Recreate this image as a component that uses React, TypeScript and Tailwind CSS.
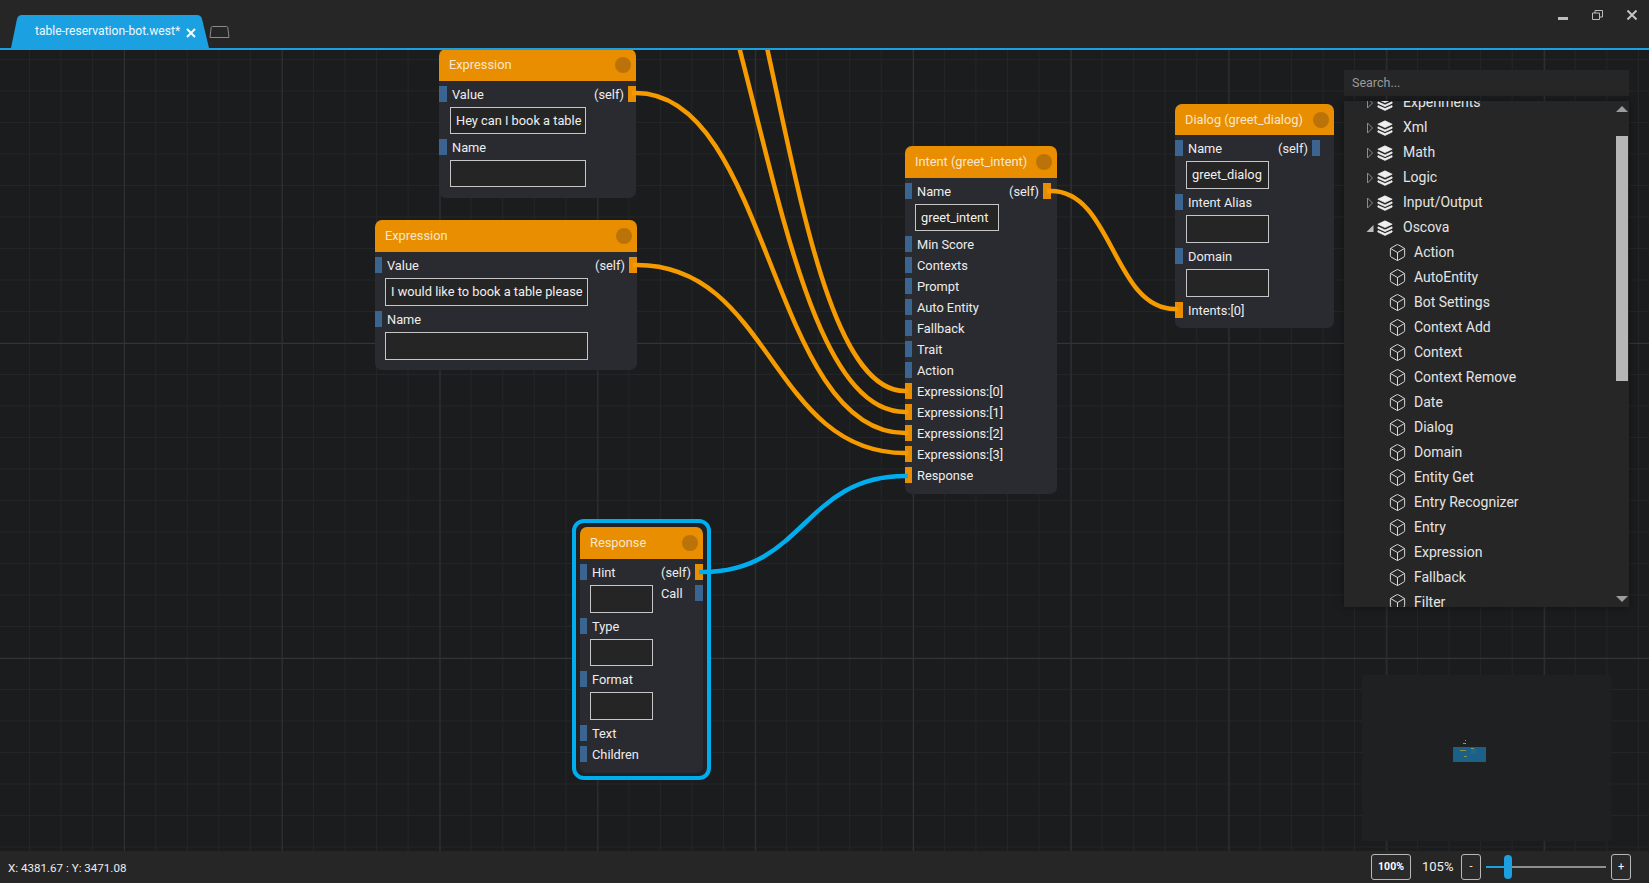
import React from 'react';
import { Box } from 'lucide-react';

const FONT = "font-['Roboto','Noto_Sans',sans-serif]";

type Field = { label: string; orange?: boolean; input?: string; inputW?: string };
type Out = { label: string; orange?: boolean };

interface NodeProps {
  title: string;
  place: string;
  width: string;
  fields: Field[];
  outs: Out[];
  header?: string;
  inputH?: string;
  outInset?: string;
  bottom?: string;
  wide?: boolean;
  selected?: boolean;
}

const Port = ({ orange, wide }: { orange?: boolean; wide?: boolean }) => (
  <span className={`block h-4 shrink-0 ${wide ? 'w-2' : 'w-[7px]'} ${orange ? 'bg-[#e98e00]' : 'bg-[#3b6591]'}`} />
);

const GraphNode: React.FC<NodeProps> = ({
  title,
  place,
  width,
  fields,
  outs,
  header = 'h-8',
  inputH = 'h-7',
  outInset = 'pr-0',
  bottom = 'pb-[11px]',
  wide,
  selected,
}) => (
  <div className={`absolute ${place} ${width}`}>
    {selected && (
      <div className="absolute -top-2 -bottom-[7px] -left-2 -right-2 rounded-[12px] border-4 border-[#00aeef] bg-[#202125]" />
    )}
    <div className={`relative rounded-[7px] bg-[#2a2b30] overflow-hidden ${bottom}`}>
      <div className={`flex items-center justify-between bg-[#e98e00] pl-[10px] pr-[5px] ${header}`}>
        <span className="text-[12.8px] text-[#f8e6cd] whitespace-nowrap">{title}</span>
        <span className="block w-4 h-4 rounded-full bg-[#bb7309]" />
      </div>
      <div className="flex pt-[5px]">
        <div className="flex flex-col gap-[5px]">
          {fields.map((f) => (
            <div key={f.label} className="flex flex-col gap-[5px]">
              <div className="flex items-center h-4 gap-[5px]">
                <Port orange={f.orange} wide={wide} />
                <span className="pt-[2px] text-[12.8px] text-[#ededed] whitespace-nowrap">{f.label}</span>
              </div>
              {f.inputW && (
                <div
                  className={`flex items-center border border-[#c6c6c6] bg-[#252525] pl-[5px] text-[12.8px] text-[#f0f0f0] whitespace-nowrap ${wide ? 'ml-[11px]' : 'ml-[10px]'} ${f.inputW} ${inputH}`}
                >
                  {f.input}
                </div>
              )}
            </div>
          ))}
        </div>
        <div className={`ml-auto flex flex-col gap-[5px] ${outInset}`}>
          {outs.map((o) => (
            <div key={o.label} className="flex items-center h-4 gap-[5px]">
              <span className="pt-[2px] w-[29px] text-[12.8px] text-[#ededed]">{o.label}</span>
              <Port orange={o.orange} wide />
            </div>
          ))}
        </div>
      </div>
    </div>
  </div>
);

const StackIcon = () => (
  <svg width="16" height="16" viewBox="0 0 16 16" className="shrink-0" fill="#f0f0f0" stroke="#f0f0f0" strokeWidth="0.7" strokeLinejoin="round">
    <path d="M8 0.8 L15.2 4.2 L8 7.6 L0.8 4.2 Z" />
    <path d="M1 6.8 L8 10 L15 6.8 L15.2 8.2 L8 11.6 L0.8 8.2 Z" />
    <path d="M1 10.6 L8 13.6 L15 10.6 L15.2 12 L8 15.4 L0.8 12 Z" />
  </svg>
);

const groups = ['Experiments', 'Xml', 'Math', 'Logic', 'Input/Output'];
const items = [
  'Action',
  'AutoEntity',
  'Bot Settings',
  'Context Add',
  'Context',
  'Context Remove',
  'Date',
  'Dialog',
  'Domain',
  'Entity Get',
  'Entry Recognizer',
  'Entry',
  'Expression',
  'Fallback',
  'Filter',
];

const GroupRow = ({ name, open }: { name: string; open?: boolean }) => (
  <div className="flex items-center h-[25px] pl-[22px]">
    <svg width="8" height="12" viewBox="0 0 8 12" className="shrink-0 mr-[3px]">
      {open ? (
        <path d="M7.5 3 V10 H0.5 Z" fill="#bdbdbd" />
      ) : (
        <path d="M1.5 1 L6.5 6 L1.5 11 Z" fill="none" stroke="#8c8c8c" />
      )}
    </svg>
    <StackIcon />
    <span className="ml-[10px] text-[14px] text-[#e4e4e4]">{name}</span>
  </div>
);

const NodePanel = () => (
  <div className="absolute left-[1344px] top-5 w-[285px] flex flex-col gap-[5px]">
    <div className="flex items-center h-[26px] bg-[#262626] pl-2 text-[12.5px] text-[#9a9a9a]">Search...</div>
    <div className="relative h-[506px] bg-[#262626] overflow-hidden shadow-[0_0_8px_rgba(0,0,0,0.35)]">
      <div className="-mt-[11px]">
        {groups.map((g) => (
          <GroupRow key={g} name={g} />
        ))}
        <GroupRow name="Oscova" open />
        {items.map((it) => (
          <div key={it} className="flex items-center h-[25px] pl-[44px]">
            <Box size={19} strokeWidth={1.25} className="text-[#dcdcdc] shrink-0" />
            <span className="ml-[7px] text-[14px] text-[#e4e4e4]">{it}</span>
          </div>
        ))}
      </div>
      {/* scrollbar */}
      <div className="absolute right-px top-0 bottom-0 w-3 flex flex-col items-center">
        <svg width="12" height="6" viewBox="0 0 12 6" className="mt-[5px]">
          <path d="M6 0 L12 6 H0 Z" fill="#9c9c9c" />
        </svg>
        <div className="mt-6 w-3 h-[245px] bg-[#b6b6b6]" />
        <svg width="12" height="6" viewBox="0 0 12 6" className="mt-auto mb-[5px]">
          <path d="M0 0 H12 L6 6 Z" fill="#9c9c9c" />
        </svg>
      </div>
    </div>
  </div>
);

const MiniMap = () => (
  <div className="absolute left-[1362px] top-[625px] w-[249px] h-[166px] bg-[#1f2022]">
    <div className="absolute left-[103px] top-[65px] w-px h-px bg-[#d08a1c]" />
    <div className="absolute left-[101px] top-[68px] w-[3px] h-px bg-[#d08a1c]" />
    <div className="absolute left-[91px] top-[72px] w-[33px] h-[15px] bg-[#1b6187]">
      <div className="absolute left-[7px] top-[3px] w-[6px] h-px bg-[#8f9050]" />
      <div className="absolute left-[18px] top-[1px] w-[3px] h-px bg-[#8f9050]" />
      <div className="absolute left-[11px] top-[9px] w-[3px] h-px bg-[#8f9050]" />
      <div className="absolute left-[18px] top-[2px] w-[5px] h-[5px] bg-[#22668c]" />
    </div>
  </div>
);

const Wires = () => (
  <svg
    className="absolute left-0 top-0 pointer-events-none"
    width="1649"
    height="801"
    viewBox="0 50 1649 801"
    fill="none"
    strokeWidth="4.5"
  >
    <g stroke="#f59b00">
      <path d="M648 -211 C776 -211 776 391 905 391 H908" />
      <path d="M605 -192 C755 -192 755 412 905 412 H908" />
      <path d="M632 93 H636 C770 93 770 433 905 433 H908" />
      <path d="M633 265 H637 C771 265 771 453 905 453 H908" />
      <path d="M1047 191 H1051 C1113 191 1113 309 1175 309 H1178" />
    </g>
    <path d="M699 572 H703 C804 572 804 476 905 476 H908" stroke="#00aeef" />
  </svg>
);

const App: React.FC = () => {
  return (
    <div className={`w-[1649px] h-[883px] flex flex-col overflow-hidden bg-[#262626] ${FONT}`}>
      {/* title bar with tabs */}
      <div className="relative z-10 flex h-[50px] shrink-0 border-b-2 border-[#1ba1e2] bg-[#262626] pl-[11px]">
        <div className="relative mt-[15px] flex w-[198px] h-[33px] items-center pl-6">
          <svg className="absolute left-0 top-0" width="198" height="33" viewBox="0 0 198 33">
            <path d="M0 33 L6 4 Q7 0 11 0 H186 Q190 0 191 4 L198 33 Z" fill="#1ba1e2" />
          </svg>
          <span className="relative text-[12.1px] text-[#f0f9fe] whitespace-nowrap">table-reservation-bot.west*</span>
          <svg className="absolute left-[175px] top-[13px]" width="10" height="10" viewBox="0 0 10 10">
            <path d="M1 1 L9 9 M9 1 L1 9" stroke="#f4fbff" strokeWidth="2" />
          </svg>
        </div>
        <svg className="mt-[25px]" width="21" height="14" viewBox="0 0 21 14" fill="none">
          <path d="M1 12.5 L2.2 2.5 Q2.4 1.5 3.5 1.5 H17.5 Q18.6 1.5 18.8 2.5 L20 12.5 Z" stroke="#8b8b8b" strokeLinejoin="round" />
        </svg>
        <div className="ml-auto flex items-start pt-[10px] pr-3">
          <svg width="10" height="10" viewBox="0 0 10 10">
            <path d="M0 7 H10 V10 H0 Z" fill="#bdbdbd" />
          </svg>
          <svg className="ml-6" width="11" height="10" viewBox="0 0 11 10" fill="none" stroke="#bdbdbd">
            <path d="M0.5 3 H7.5 V9.5 H0.5 Z" />
            <path d="M3 3 V0.5 H10.5 V7 H7.5" />
          </svg>
          <svg className="ml-6" width="10" height="10" viewBox="0 0 10 10">
            <path d="M0.5 0.5 L9.5 9.5 M9.5 0.5 L0.5 9.5" stroke="#c4c4c4" strokeWidth="2" />
          </svg>
        </div>
      </div>

      {/* graph canvas */}
      <div className="relative flex-1 bg-[#1b1c1e] bg-[linear-gradient(to_right,#303133_1px,transparent_1px),linear-gradient(to_bottom,#333436_1px,transparent_1px),linear-gradient(to_right,#242527_1px,transparent_1px),linear-gradient(to_bottom,#242527_1px,transparent_1px)] bg-[size:157.8px_100%,100%_315px,31.56px_100%,100%_31.5px] bg-[position:124px_0,0_293px,29px_0,0_9px]">
        <GraphNode
          wide
          title="Expression"
          place="left-[439px] top-[-1px]"
          width="w-[197px]"
          inputH="h-[27px]"
          fields={[
            { label: 'Value', input: 'Hey can I book a table', inputW: 'w-[136px]' },
            { label: 'Name', input: '', inputW: 'w-[136px]' },
          ]}
          outs={[{ label: '(self)', orange: true }]}
        />
        <GraphNode
          title="Expression"
          place="left-[375px] top-[170px]"
          width="w-[262px]"
          bottom="pb-[10px]"
          fields={[
            { label: 'Value', input: 'I would like to book a table please', inputW: 'w-[203px]' },
            { label: 'Name', input: '', inputW: 'w-[203px]' },
          ]}
          outs={[{ label: '(self)', orange: true }]}
        />
        <GraphNode
          title="Intent (greet_intent)"
          place="left-[905px] top-24"
          width="w-[152px]"
          inputH="h-[27px]"
          outInset="pr-[6px]"
          fields={[
            { label: 'Name', input: 'greet_intent', inputW: 'w-[84px]' },
            { label: 'Min Score' },
            { label: 'Contexts' },
            { label: 'Prompt' },
            { label: 'Auto Entity' },
            { label: 'Fallback' },
            { label: 'Trait' },
            { label: 'Action' },
            { label: 'Expressions:[0]', orange: true },
            { label: 'Expressions:[1]', orange: true },
            { label: 'Expressions:[2]', orange: true },
            { label: 'Expressions:[3]', orange: true },
            { label: 'Response', orange: true },
          ]}
          outs={[{ label: '(self)', orange: true }]}
        />
        <GraphNode
          wide
          title="Dialog (greet_dialog)"
          place="left-[1175px] top-[54px]"
          width="w-[159px]"
          header="h-[31px]"
          bottom="pb-[10px]"
          outInset="pr-[14px]"
          fields={[
            { label: 'Name', input: 'greet_dialog', inputW: 'w-[83px]' },
            { label: 'Intent Alias', input: '', inputW: 'w-[83px]' },
            { label: 'Domain', input: '', inputW: 'w-[83px]' },
            { label: 'Intents:[0]', orange: true },
          ]}
          outs={[{ label: '(self)' }]}
        />
        <GraphNode
          selected
          title="Response"
          place="left-[580px] top-[477px]"
          width="w-[123px]"
          inputH="h-[27.5px]"
          fields={[
            { label: 'Hint', input: '', inputW: 'w-[63px]' },
            { label: 'Type', input: '', inputW: 'w-[63px]' },
            { label: 'Format', input: '', inputW: 'w-[63px]' },
            { label: 'Text' },
            { label: 'Children' },
          ]}
          outs={[{ label: '(self)', orange: true }, { label: 'Call' }]}
        />
        <Wires />
        <NodePanel />
        <MiniMap />
      </div>

      {/* status bar */}
      <div className="relative flex h-8 shrink-0 items-center bg-[#262626] pl-2 pr-[18px] text-[11.6px] text-[#ececec]">
        <span className="pt-[3px]">X: 4381.67 : Y: 3471.08</span>
        <div className="ml-auto flex items-center">
          <button className="flex items-center justify-center w-10 h-[26px] rounded-[3px] border border-[#b8b8b8] bg-[#2a2a2a] text-[10.5px] font-bold text-white">
            100%
          </button>
          <span className="ml-[11px] w-[39px] text-[13px] text-[#f0f0f0]">105%</span>
          <button className="flex items-center justify-center w-5 h-[26px] rounded-[3px] border border-[#b8b8b8] bg-[#2a2a2a] text-[11px] text-white">
            -
          </button>
          <div className="ml-[5px] flex w-[120px] items-center">
            <div className="w-[18px] h-[2px] bg-[#1ba1e2]" />
            <div className="w-2 h-6 rounded-full bg-[#1ba1e2]" />
            <div className="flex-1 h-[2px] bg-[#8e8e8e]" />
          </div>
          <button className="ml-[5px] flex items-center justify-center w-5 h-[26px] rounded-[3px] border border-[#b8b8b8] bg-[#2a2a2a] text-[11px] text-white">
            +
          </button>
        </div>
      </div>
    </div>
  );
};

export default App;
